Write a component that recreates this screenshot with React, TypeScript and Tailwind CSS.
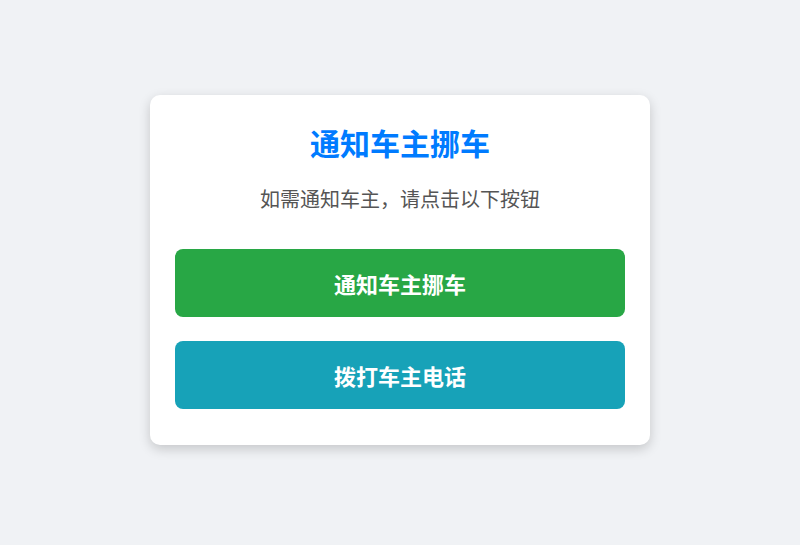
import React from 'react';

const font = { fontFamily: '"Noto Sans CJK SC", "Noto Sans", sans-serif' };

export default function App() {
  const notify = () => {};
  const call = () => {};

  return (
    <div className="min-h-screen w-full bg-[#f0f2f5] flex items-start justify-center pt-[95px]" style={font}>
      <div className="w-[500px] bg-white rounded-[10px] shadow-[0_4px_12px_rgba(0,0,0,0.18)] px-[25px] pt-[25px] pb-[36px] flex flex-col items-center">
        <h1 className="text-[30px] leading-[44px] font-bold text-[#007bff]">通知车主挪车</h1>
        <p className="mt-[20px] text-[20px] leading-[30px] text-[#555]">如需通知车主，请点击以下按钮</p>
        <div className="mt-[35px] w-full flex flex-col gap-[24px]">
          <button
            type="button"
            onClick={notify}
            className="w-full h-[68px] rounded-[8px] bg-[#28a745] text-white text-[22px] font-bold"
          >
            通知车主挪车
          </button>
          <button
            type="button"
            onClick={call}
            className="w-full h-[68px] rounded-[8px] bg-[#17a2b8] text-white text-[22px] font-bold"
          >
            拨打车主电话
          </button>
        </div>
      </div>
    </div>
  );
}
